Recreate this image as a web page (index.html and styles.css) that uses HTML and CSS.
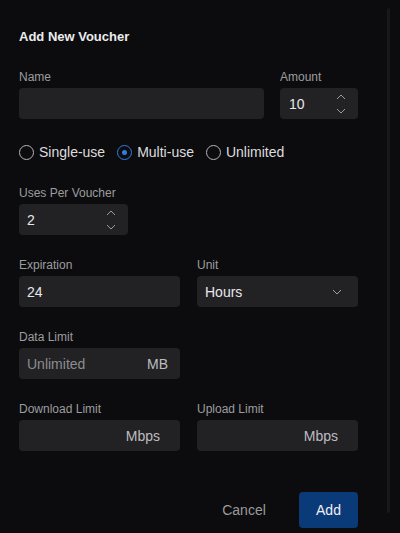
FILE: index.html
```html
<!DOCTYPE html>
<html>
<head>
<meta charset="utf-8">
<link rel="stylesheet" href="styles.css">
</head>
<body>
<div class="dialog">
  <h2 class="title">Add New Voucher</h2>

  <div class="row row-name">
    <div class="field">
      <label class="label">Name</label>
      <div class="input"></div>
    </div>
    <div class="field">
      <label class="label">Amount</label>
      <div class="input stepper">
        <span class="value">10</span>
        <span class="arrows">
          <svg width="10" height="6" viewBox="0 0 10 6"><path d="M1 5 L5 1 L9 5" fill="none" stroke="#9a9a9a" stroke-width="1"/></svg>
          <svg width="10" height="6" viewBox="0 0 10 6"><path d="M1 1 L5 5 L9 1" fill="none" stroke="#9a9a9a" stroke-width="1"/></svg>
        </span>
      </div>
    </div>
  </div>

  <div class="radios">
    <div class="radio"><span class="circle"></span><span>Single-use</span></div>
    <div class="radio"><span class="circle checked"></span><span>Multi-use</span></div>
    <div class="radio"><span class="circle"></span><span>Unlimited</span></div>
  </div>

  <div class="field group uses">
    <label class="label">Uses Per Voucher</label>
    <div class="input stepper">
      <span class="value">2</span>
      <span class="arrows">
        <svg width="10" height="6" viewBox="0 0 10 6"><path d="M1 5 L5 1 L9 5" fill="none" stroke="#9a9a9a" stroke-width="1"/></svg>
        <svg width="10" height="6" viewBox="0 0 10 6"><path d="M1 1 L5 5 L9 1" fill="none" stroke="#9a9a9a" stroke-width="1"/></svg>
      </span>
    </div>
  </div>

  <div class="row row-half group">
    <div class="field">
      <label class="label">Expiration</label>
      <div class="input"><span class="value">24</span></div>
    </div>
    <div class="field">
      <label class="label">Unit</label>
      <div class="input select">
        <span class="value">Hours</span>
        <svg width="10" height="6" viewBox="0 0 10 6"><path d="M1 1 L5 5 L9 1" fill="none" stroke="#a0a0a0" stroke-width="1"/></svg>
      </div>
    </div>
  </div>

  <div class="row row-half group">
    <div class="field">
      <label class="label">Data Limit</label>
      <div class="input suffixed suffix-mb">
        <span class="placeholder">Unlimited</span>
        <span class="suffix">MB</span>
      </div>
    </div>
  </div>

  <div class="row row-half group">
    <div class="field">
      <label class="label">Download Limit</label>
      <div class="input suffixed suffix-mbps">
        <span class="placeholder"></span>
        <span class="suffix">Mbps</span>
      </div>
    </div>
    <div class="field">
      <label class="label">Upload Limit</label>
      <div class="input suffixed suffix-mbps">
        <span class="placeholder"></span>
        <span class="suffix">Mbps</span>
      </div>
    </div>
  </div>

  <div class="footer">
    <button class="btn btn-cancel">Cancel</button>
    <button class="btn btn-add">Add</button>
  </div>
</div>
<div class="scrollbar"></div>
</body>
</html>
```

FILE: styles.css
```css
html, body {
  margin: 0;
  padding: 0;
  background: #0c0c0e;
  width: 400px;
  height: 533px;
  overflow: hidden;
}

body {
  font-family: "Liberation Sans", Arial, sans-serif;
  color: #e4e4e6;
  position: relative;
}

.dialog {
  padding: 29px 0 0 19px;
  width: 339px;
}

.title {
  margin: 0;
  font-size: 13px;
  font-weight: bold;
  line-height: 16px;
  color: #ececee;
}

.field {
  display: flex;
  flex-direction: column;
}

.label {
  font-size: 12px;
  line-height: 15px;
  color: #9c9c9f;
  margin-bottom: 3px;
}

.input {
  height: 31px;
  background: #222225;
  border-radius: 4px;
  display: flex;
  align-items: center;
  box-sizing: border-box;
  padding: 0 8px;
  font-size: 14px;
  color: #e8e8ea;
}

.row {
  display: grid;
}

.row-name {
  margin-top: 25px;
  grid-template-columns: 245px 78px;
  column-gap: 16px;
}

.row-name .stepper {
  padding-left: 9px;
}

.row-half {
  grid-template-columns: 161px 161px;
  column-gap: 17px;
}

.group {
  margin-top: 23px;
}

.stepper {
  justify-content: space-between;
  padding-right: 12px;
}

.arrows {
  display: flex;
  flex-direction: column;
  gap: 8px;
}

.arrows svg {
  display: block;
}

.radios {
  margin-top: 25px;
  display: flex;
  align-items: center;
  gap: 12px;
  height: 16px;
  font-size: 14px;
  color: #dcdcde;
}

.radio {
  display: flex;
  align-items: center;
  gap: 5px;
}

.circle {
  width: 15px;
  height: 15px;
  box-sizing: border-box;
  border: 1px solid #b4b4b7;
  border-radius: 50%;
  display: flex;
  align-items: center;
  justify-content: center;
}

.circle.checked {
  border-color: #2f7de1;
}

.circle.checked::after {
  content: "";
  width: 5px;
  height: 5px;
  border-radius: 50%;
  background: #2f7de1;
}

.uses {
  margin-top: 26px;
  width: 109px;
}

.select {
  justify-content: space-between;
  padding-right: 16px;
}

.select svg {
  display: block;
}

.suffixed {
  justify-content: space-between;
}

.placeholder {
  color: #8c8c8f;
}

.suffix {
  color: #bdbdc0;
}

.suffix-mb {
  padding-right: 12px;
}

.suffix-mbps {
  padding-right: 20px;
}

.footer {
  margin-top: 41px;
  display: flex;
  justify-content: flex-end;
  align-items: center;
  gap: 22px;
}

.btn {
  font-family: "Liberation Sans", Arial, sans-serif;
  font-size: 14px;
  border: none;
  height: 36px;
  border-radius: 4px;
  padding: 0;
  cursor: pointer;
}

.btn-cancel {
  background: transparent;
  color: #9a9a9d;
  width: 66px;
}

.btn-add {
  background: #0b3a78;
  color: #f0f0f2;
  width: 59px;
}

.scrollbar {
  position: absolute;
  left: 387px;
  top: 8px;
  width: 3px;
  height: 505px;
  background: #18181b;
  border-radius: 2px;
}
```
